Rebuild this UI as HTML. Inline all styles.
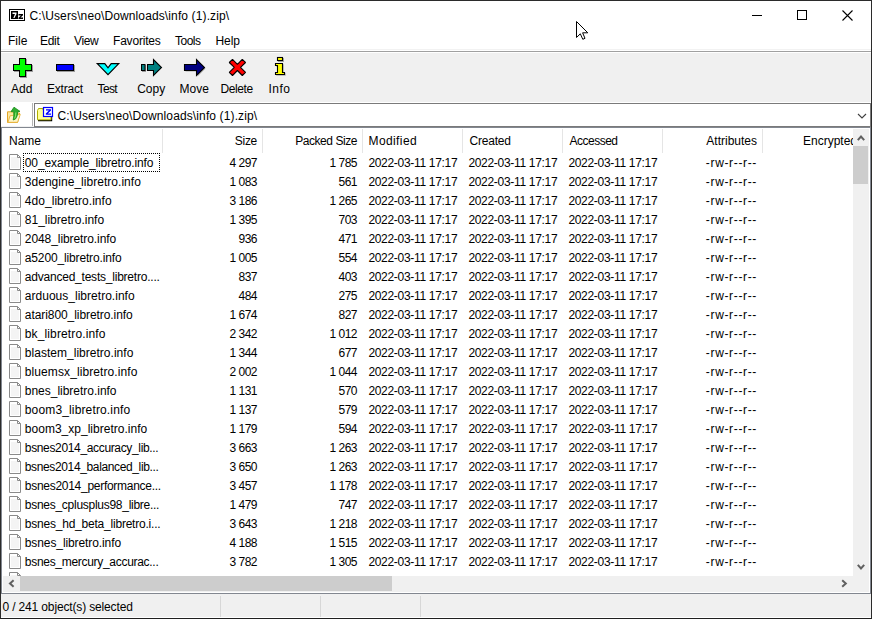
<!DOCTYPE html><html><head><meta charset="utf-8"><style>
*{margin:0;padding:0;box-sizing:border-box}
html,body{width:872px;height:619px;overflow:hidden;background:#fff}
body{position:relative;font-family:"Liberation Sans",sans-serif;font-size:12px;color:#000}
.a{position:absolute}
.t{position:absolute;white-space:pre;line-height:14px;height:14px}
.tr{text-align:right}
.ln{position:absolute}
svg{position:absolute;overflow:visible}
</style></head><body>
<div class="a" style="left:0;top:0;width:872px;height:619px;border:1px solid #2b2b2b;border-bottom-color:#1f1f1f"></div>
<svg style="left:9px;top:9px" width="16" height="12" viewBox="0 0 16 12">
<rect x="0.5" y="0.5" width="15" height="11" fill="#fff" stroke="#000"/>
<rect x="2" y="2" width="7" height="8" fill="#000"/>
<path d="M3.5 3.5 H7.5 V5 L5.5 9 H4.3 L6 5 H3.5 Z" fill="#fff"/>
<path d="M9.5 5 H14 V6.3 L11.5 8.6 H14 V10 H9.5 V8.7 L12 6.4 H9.5 Z" fill="#000"/>
</svg>
<div class="t " style="left:29.5px;top:9px;letter-spacing:0.12px">C:\Users\neo\Downloads\info (1).zip\</div>
<div class="ln" style="left:752px;top:15px;width:10px;height:1px;background:#000"></div>
<div class="ln" style="left:797px;top:10px;width:10px;height:10px;border:1px solid #000"></div>
<svg style="left:842px;top:10px" width="11" height="11" viewBox="0 0 11 11"><path d="M0.5 0.5 L10.5 10.5 M10.5 0.5 L0.5 10.5" stroke="#000" stroke-width="1.1"/></svg>
<div class="t " style="left:8px;top:34px;letter-spacing:0px">File</div>
<div class="t " style="left:40px;top:34px;letter-spacing:-0.3px">Edit</div>
<div class="t " style="left:74px;top:34px;letter-spacing:-0.4px">View</div>
<div class="t " style="left:113px;top:34px;letter-spacing:-0.2px">Favorites</div>
<div class="t " style="left:175px;top:34px;letter-spacing:-0.5px">Tools</div>
<div class="t " style="left:215.5px;top:34px;letter-spacing:-0.1px">Help</div>
<div class="ln" style="left:1px;top:49px;width:870px;height:1px;background:#f2f2f2"></div>
<div class="ln" style="left:1px;top:51px;width:870px;height:1px;background:#a0a0a0"></div>
<div class="a" style="left:1px;top:53px;width:870px;height:49px;background:#f0f0f0"></div>
<svg style="left:0;top:0" width="872" height="110">
<defs><filter id="sh" x="-20%" y="-20%" width="140%" height="140%"><feOffset dx="1" dy="1"/><feGaussianBlur stdDeviation="0.4"/></filter></defs>
<g>
<path d="M19 58H26V64H32V71H26V77H19V71H13V64H19Z" fill="#000" opacity="0.35" transform="translate(1,1)"/>
<path d="M19 58H26V64H32V71H26V77H19V71H13V64H19Z" fill="#000"/>
<path d="M20 59H25V65H31V70H25V76H20V70H14V65H20Z" fill="#00ff00"/>
</g>
<g>
<rect x="57" y="65" width="18" height="7" fill="#000" opacity="0.35"/>
<rect x="56" y="64" width="18" height="7" fill="#000"/>
<rect x="57" y="65" width="16" height="5" fill="#0000ff"/>
</g>
<g>
<path d="M97.3 63.6H104.8L108 67.8L111.2 63.6H118.7L108 74.6Z" fill="#00ffff" stroke="#000" stroke-width="1.2" stroke-linejoin="miter"/>
</g>
<g>
<rect x="142" y="65" width="4" height="7" fill="#000" opacity="0.35"/>
<rect x="141.5" y="64.5" width="3.5" height="6" fill="#008080" stroke="#000" stroke-width="1"/>
<path d="M147.5 64.5H153.5V59.5L161.5 67.5L153.5 75.5V70.5H147.5Z" fill="#008080" stroke="#000" stroke-width="1.1"/>
</g>
<g>
<path d="M184.5 64.5H196.5V59.5L204.5 67.5L196.5 75.5V70.5H184.5Z" fill="#000" opacity="0.3" transform="translate(1,1)"/>
<path d="M184.5 64.5H196.5V59.5L204.5 67.5L196.5 75.5V70.5H184.5Z" fill="#000080" stroke="#000" stroke-width="1.1"/>
</g>
<g>
<path d="M229.3 62.5L232.5 59.3L237.4 64.3L242.3 59.3L245.5 62.5L240.5 67.4L245.5 72.3L242.3 75.5L237.4 70.5L232.5 75.5L229.3 72.3L234.3 67.4Z" fill="#ff0000" stroke="#000" stroke-width="1.1" stroke-linejoin="bevel"/>
</g>
<g>
<rect x="278" y="58" width="6" height="4" fill="#000" opacity="0.3"/>
<rect x="277.5" y="57.5" width="5" height="3" fill="#ffff00" stroke="#000" stroke-width="1.1"/>
<path d="M275.5 63.5 H282.5 V72.5 H284.5 V74.5 H275.5 V72.5 H277.5 V65.5 H275.5Z" fill="#000" opacity="0.3" stroke="#000" stroke-width="1.1" stroke-opacity="0.3" transform="translate(1,1)"/>
<path d="M275.5 63.5 H282.5 V72.5 H284.5 V74.5 H275.5 V72.5 H277.5 V65.5 H275.5Z" fill="#ffff00" stroke="#000" stroke-width="1.1"/>
</g>
</svg>
<div class="t " style="left:11px;top:82px;letter-spacing:0px">Add</div>
<div class="t " style="left:47px;top:82px;letter-spacing:-0.2px">Extract</div>
<div class="t " style="left:97.5px;top:82px;letter-spacing:-0.6px">Test</div>
<div class="t " style="left:137.2px;top:82px;letter-spacing:0px">Copy</div>
<div class="t " style="left:179.5px;top:82px;letter-spacing:0px">Move</div>
<div class="t " style="left:220.5px;top:82px;letter-spacing:-0.4px">Delete</div>
<div class="t " style="left:268.5px;top:82px;letter-spacing:0.5px">Info</div>
<div class="ln" style="left:1px;top:126px;width:33px;height:1px;background:#f0f0f0"></div>
<div class="ln" style="left:32px;top:103px;width:1px;height:23px;background:#b4b4b4"></div>
<div class="a" style="left:34px;top:103px;width:837px;height:24px;border:1px solid #7a7a7a;background:#fff"></div>
<svg style="left:0;top:0" width="872" height="130">
<path d="M7.5 111.8 H12.5 L13.5 113 H19.5 V114.5 L17.5 122.5 H7.5 Z" fill="#fce9a2" stroke="#e3a72a" stroke-width="1"/>
<path d="M10 115.8 L20.3 114.3 L17.6 122.3 H8 Z" fill="#fff5c6" stroke="#e8b33c" stroke-width="0.9"/>
<path d="M11 111.6 L14 107.2 L20 111.4 L17.8 111.5 Q17.7 116.2 15.5 119 L13.2 120 Q14.1 116 13.8 111.6 Z" fill="#2fae2f" stroke="#128a12" stroke-width="0.8" stroke-linejoin="round"/>
<path d="M15.8 112.5 Q15.9 116.5 14.6 118.5" fill="none" stroke="#86e46a" stroke-width="1.1"/>
<path d="M38 121.3 H52.2 V117 H51 V120.1 H38Z" fill="#000"/>
<path d="M37.5 110.5 L38.5 108.5 H43 V110 H51 V119.8 H37.5 Z" fill="#ffff99" stroke="#b0b000" stroke-width="1"/>
<rect x="43.5" y="107.5" width="9" height="9" fill="#fff" stroke="#0000ff" stroke-width="1.2"/>
<path d="M46 109.2 H51 V110.6 L47.9 113.4 H51 V114.8 H45.8 V113.4 L48.9 110.6 H46 Z" fill="#0000ff"/>
<path d="M858 114 L862 118 L866 114" fill="none" stroke="#404040" stroke-width="1.1"/>
</svg>
<div class="t " style="left:57.5px;top:109px;letter-spacing:0.12px">C:\Users\neo\Downloads\info (1).zip\</div>
<div class="a" style="left:1px;top:127px;width:870px;height:467px;border:1px solid #828790;border-right-color:#828790"></div>
<div class="a" style="left:2px;top:128px;width:868px;height:465px;background:#fff"></div>
<div class="ln" style="left:162px;top:129px;width:1px;height:24px;background:#e5e5e5"></div>
<div class="ln" style="left:262px;top:129px;width:1px;height:24px;background:#e5e5e5"></div>
<div class="ln" style="left:362px;top:129px;width:1px;height:24px;background:#e5e5e5"></div>
<div class="ln" style="left:462px;top:129px;width:1px;height:24px;background:#e5e5e5"></div>
<div class="ln" style="left:562px;top:129px;width:1px;height:24px;background:#e5e5e5"></div>
<div class="ln" style="left:662px;top:129px;width:1px;height:24px;background:#e5e5e5"></div>
<div class="ln" style="left:762px;top:129px;width:1px;height:24px;background:#e5e5e5"></div>
<div class="t " style="left:9px;top:134px;">Name</div>
<div class="t tr " style="right:615px;top:134px;letter-spacing:-0.3px">Size</div>
<div class="t tr " style="right:515px;top:134px;letter-spacing:-0.45px">Packed Size</div>
<div class="t " style="left:368.5px;top:134px;letter-spacing:0.4px">Modified</div>
<div class="t " style="left:469.5px;top:134px;letter-spacing:-0.2px">Created</div>
<div class="t " style="left:569.5px;top:134px;letter-spacing:-0.5px">Accessed</div>
<div class="t tr " style="right:115px;top:134px;">Attributes</div>
<div class="t tr " style="right:15px;top:134px;">Encrypted</div>
<div class="a" style="left:3px;top:153px;width:850px;height:423px;overflow:hidden"><div class="a" style="left:-3px;top:-153px;width:872px;height:619px"><svg style="left:9px;top:154px" width="12" height="16" viewBox="0 0 12 16"><path d="M0.5 0.5 H8.5 L11.5 3.5 V15.5 H0.5 Z" fill="#fff" stroke="#8a8a8a"/><rect x="2" y="3" width="8" height="11" fill="#f4f4f4"/><path d="M8.5 0.5 V3.5 H11.5" fill="none" stroke="#8a8a8a"/></svg><div class="t " style="left:24.8px;top:156px;letter-spacing:-0.121px">00_example_libretro.info</div><div class="t tr " style="right:615px;top:156px;letter-spacing:-0.5px">4 297</div><div class="t tr " style="right:515px;top:156px;letter-spacing:-0.5px">1 785</div><div class="t " style="left:368.4px;top:156px;letter-spacing:-0.31px">2022-03-11 17:17</div><div class="t " style="left:468.4px;top:156px;letter-spacing:-0.31px">2022-03-11 17:17</div><div class="t " style="left:568.4px;top:156px;letter-spacing:-0.31px">2022-03-11 17:17</div><div class="t tr " style="right:115px;top:156px;letter-spacing:0.65px">-rw-r--r--</div><svg style="left:9px;top:173px" width="12" height="16" viewBox="0 0 12 16"><path d="M0.5 0.5 H8.5 L11.5 3.5 V15.5 H0.5 Z" fill="#fff" stroke="#8a8a8a"/><rect x="2" y="3" width="8" height="11" fill="#f4f4f4"/><path d="M8.5 0.5 V3.5 H11.5" fill="none" stroke="#8a8a8a"/></svg><div class="t " style="left:24.8px;top:175px;letter-spacing:0.029px">3dengine_libretro.info</div><div class="t tr " style="right:615px;top:175px;letter-spacing:-0.5px">1 083</div><div class="t tr " style="right:515px;top:175px;letter-spacing:-0.5px">561</div><div class="t " style="left:368.4px;top:175px;letter-spacing:-0.31px">2022-03-11 17:17</div><div class="t " style="left:468.4px;top:175px;letter-spacing:-0.31px">2022-03-11 17:17</div><div class="t " style="left:568.4px;top:175px;letter-spacing:-0.31px">2022-03-11 17:17</div><div class="t tr " style="right:115px;top:175px;letter-spacing:0.65px">-rw-r--r--</div><svg style="left:9px;top:192px" width="12" height="16" viewBox="0 0 12 16"><path d="M0.5 0.5 H8.5 L11.5 3.5 V15.5 H0.5 Z" fill="#fff" stroke="#8a8a8a"/><rect x="2" y="3" width="8" height="11" fill="#f4f4f4"/><path d="M8.5 0.5 V3.5 H11.5" fill="none" stroke="#8a8a8a"/></svg><div class="t " style="left:24.8px;top:194px;letter-spacing:0.05px">4do_libretro.info</div><div class="t tr " style="right:615px;top:194px;letter-spacing:-0.5px">3 186</div><div class="t tr " style="right:515px;top:194px;letter-spacing:-0.5px">1 265</div><div class="t " style="left:368.4px;top:194px;letter-spacing:-0.31px">2022-03-11 17:17</div><div class="t " style="left:468.4px;top:194px;letter-spacing:-0.31px">2022-03-11 17:17</div><div class="t " style="left:568.4px;top:194px;letter-spacing:-0.31px">2022-03-11 17:17</div><div class="t tr " style="right:115px;top:194px;letter-spacing:0.65px">-rw-r--r--</div><svg style="left:9px;top:211px" width="12" height="16" viewBox="0 0 12 16"><path d="M0.5 0.5 H8.5 L11.5 3.5 V15.5 H0.5 Z" fill="#fff" stroke="#8a8a8a"/><rect x="2" y="3" width="8" height="11" fill="#f4f4f4"/><path d="M8.5 0.5 V3.5 H11.5" fill="none" stroke="#8a8a8a"/></svg><div class="t " style="left:24.8px;top:213px;letter-spacing:-0.006px">81_libretro.info</div><div class="t tr " style="right:615px;top:213px;letter-spacing:-0.5px">1 395</div><div class="t tr " style="right:515px;top:213px;letter-spacing:-0.5px">703</div><div class="t " style="left:368.4px;top:213px;letter-spacing:-0.31px">2022-03-11 17:17</div><div class="t " style="left:468.4px;top:213px;letter-spacing:-0.31px">2022-03-11 17:17</div><div class="t " style="left:568.4px;top:213px;letter-spacing:-0.31px">2022-03-11 17:17</div><div class="t tr " style="right:115px;top:213px;letter-spacing:0.65px">-rw-r--r--</div><svg style="left:9px;top:230px" width="12" height="16" viewBox="0 0 12 16"><path d="M0.5 0.5 H8.5 L11.5 3.5 V15.5 H0.5 Z" fill="#fff" stroke="#8a8a8a"/><rect x="2" y="3" width="8" height="11" fill="#f4f4f4"/><path d="M8.5 0.5 V3.5 H11.5" fill="none" stroke="#8a8a8a"/></svg><div class="t " style="left:24.8px;top:232px;letter-spacing:-0.076px">2048_libretro.info</div><div class="t tr " style="right:615px;top:232px;letter-spacing:-0.5px">936</div><div class="t tr " style="right:515px;top:232px;letter-spacing:-0.5px">471</div><div class="t " style="left:368.4px;top:232px;letter-spacing:-0.31px">2022-03-11 17:17</div><div class="t " style="left:468.4px;top:232px;letter-spacing:-0.31px">2022-03-11 17:17</div><div class="t " style="left:568.4px;top:232px;letter-spacing:-0.31px">2022-03-11 17:17</div><div class="t tr " style="right:115px;top:232px;letter-spacing:0.65px">-rw-r--r--</div><svg style="left:9px;top:249px" width="12" height="16" viewBox="0 0 12 16"><path d="M0.5 0.5 H8.5 L11.5 3.5 V15.5 H0.5 Z" fill="#fff" stroke="#8a8a8a"/><rect x="2" y="3" width="8" height="11" fill="#f4f4f4"/><path d="M8.5 0.5 V3.5 H11.5" fill="none" stroke="#8a8a8a"/></svg><div class="t " style="left:24.8px;top:251px;letter-spacing:-0.144px">a5200_libretro.info</div><div class="t tr " style="right:615px;top:251px;letter-spacing:-0.5px">1 005</div><div class="t tr " style="right:515px;top:251px;letter-spacing:-0.5px">554</div><div class="t " style="left:368.4px;top:251px;letter-spacing:-0.31px">2022-03-11 17:17</div><div class="t " style="left:468.4px;top:251px;letter-spacing:-0.31px">2022-03-11 17:17</div><div class="t " style="left:568.4px;top:251px;letter-spacing:-0.31px">2022-03-11 17:17</div><div class="t tr " style="right:115px;top:251px;letter-spacing:0.65px">-rw-r--r--</div><svg style="left:9px;top:268px" width="12" height="16" viewBox="0 0 12 16"><path d="M0.5 0.5 H8.5 L11.5 3.5 V15.5 H0.5 Z" fill="#fff" stroke="#8a8a8a"/><rect x="2" y="3" width="8" height="11" fill="#f4f4f4"/><path d="M8.5 0.5 V3.5 H11.5" fill="none" stroke="#8a8a8a"/></svg><div class="t " style="left:24.8px;top:270px;letter-spacing:-0.219px">advanced_tests_libretro....</div><div class="t tr " style="right:615px;top:270px;letter-spacing:-0.5px">837</div><div class="t tr " style="right:515px;top:270px;letter-spacing:-0.5px">403</div><div class="t " style="left:368.4px;top:270px;letter-spacing:-0.31px">2022-03-11 17:17</div><div class="t " style="left:468.4px;top:270px;letter-spacing:-0.31px">2022-03-11 17:17</div><div class="t " style="left:568.4px;top:270px;letter-spacing:-0.31px">2022-03-11 17:17</div><div class="t tr " style="right:115px;top:270px;letter-spacing:0.65px">-rw-r--r--</div><svg style="left:9px;top:287px" width="12" height="16" viewBox="0 0 12 16"><path d="M0.5 0.5 H8.5 L11.5 3.5 V15.5 H0.5 Z" fill="#fff" stroke="#8a8a8a"/><rect x="2" y="3" width="8" height="11" fill="#f4f4f4"/><path d="M8.5 0.5 V3.5 H11.5" fill="none" stroke="#8a8a8a"/></svg><div class="t " style="left:24.8px;top:289px;letter-spacing:0.02px">arduous_libretro.info</div><div class="t tr " style="right:615px;top:289px;letter-spacing:-0.5px">484</div><div class="t tr " style="right:515px;top:289px;letter-spacing:-0.5px">275</div><div class="t " style="left:368.4px;top:289px;letter-spacing:-0.31px">2022-03-11 17:17</div><div class="t " style="left:468.4px;top:289px;letter-spacing:-0.31px">2022-03-11 17:17</div><div class="t " style="left:568.4px;top:289px;letter-spacing:-0.31px">2022-03-11 17:17</div><div class="t tr " style="right:115px;top:289px;letter-spacing:0.65px">-rw-r--r--</div><svg style="left:9px;top:306px" width="12" height="16" viewBox="0 0 12 16"><path d="M0.5 0.5 H8.5 L11.5 3.5 V15.5 H0.5 Z" fill="#fff" stroke="#8a8a8a"/><rect x="2" y="3" width="8" height="11" fill="#f4f4f4"/><path d="M8.5 0.5 V3.5 H11.5" fill="none" stroke="#8a8a8a"/></svg><div class="t " style="left:24.8px;top:308px;letter-spacing:-0.071px">atari800_libretro.info</div><div class="t tr " style="right:615px;top:308px;letter-spacing:-0.5px">1 674</div><div class="t tr " style="right:515px;top:308px;letter-spacing:-0.5px">827</div><div class="t " style="left:368.4px;top:308px;letter-spacing:-0.31px">2022-03-11 17:17</div><div class="t " style="left:468.4px;top:308px;letter-spacing:-0.31px">2022-03-11 17:17</div><div class="t " style="left:568.4px;top:308px;letter-spacing:-0.31px">2022-03-11 17:17</div><div class="t tr " style="right:115px;top:308px;letter-spacing:0.65px">-rw-r--r--</div><svg style="left:9px;top:325px" width="12" height="16" viewBox="0 0 12 16"><path d="M0.5 0.5 H8.5 L11.5 3.5 V15.5 H0.5 Z" fill="#fff" stroke="#8a8a8a"/><rect x="2" y="3" width="8" height="11" fill="#f4f4f4"/><path d="M8.5 0.5 V3.5 H11.5" fill="none" stroke="#8a8a8a"/></svg><div class="t " style="left:24.8px;top:327px;letter-spacing:0.127px">bk_libretro.info</div><div class="t tr " style="right:615px;top:327px;letter-spacing:-0.5px">2 342</div><div class="t tr " style="right:515px;top:327px;letter-spacing:-0.5px">1 012</div><div class="t " style="left:368.4px;top:327px;letter-spacing:-0.31px">2022-03-11 17:17</div><div class="t " style="left:468.4px;top:327px;letter-spacing:-0.31px">2022-03-11 17:17</div><div class="t " style="left:568.4px;top:327px;letter-spacing:-0.31px">2022-03-11 17:17</div><div class="t tr " style="right:115px;top:327px;letter-spacing:0.65px">-rw-r--r--</div><svg style="left:9px;top:344px" width="12" height="16" viewBox="0 0 12 16"><path d="M0.5 0.5 H8.5 L11.5 3.5 V15.5 H0.5 Z" fill="#fff" stroke="#8a8a8a"/><rect x="2" y="3" width="8" height="11" fill="#f4f4f4"/><path d="M8.5 0.5 V3.5 H11.5" fill="none" stroke="#8a8a8a"/></svg><div class="t " style="left:24.8px;top:346px;letter-spacing:0.025px">blastem_libretro.info</div><div class="t tr " style="right:615px;top:346px;letter-spacing:-0.5px">1 344</div><div class="t tr " style="right:515px;top:346px;letter-spacing:-0.5px">677</div><div class="t " style="left:368.4px;top:346px;letter-spacing:-0.31px">2022-03-11 17:17</div><div class="t " style="left:468.4px;top:346px;letter-spacing:-0.31px">2022-03-11 17:17</div><div class="t " style="left:568.4px;top:346px;letter-spacing:-0.31px">2022-03-11 17:17</div><div class="t tr " style="right:115px;top:346px;letter-spacing:0.65px">-rw-r--r--</div><svg style="left:9px;top:363px" width="12" height="16" viewBox="0 0 12 16"><path d="M0.5 0.5 H8.5 L11.5 3.5 V15.5 H0.5 Z" fill="#fff" stroke="#8a8a8a"/><rect x="2" y="3" width="8" height="11" fill="#f4f4f4"/><path d="M8.5 0.5 V3.5 H11.5" fill="none" stroke="#8a8a8a"/></svg><div class="t " style="left:24.8px;top:365px;letter-spacing:0.095px">bluemsx_libretro.info</div><div class="t tr " style="right:615px;top:365px;letter-spacing:-0.5px">2 002</div><div class="t tr " style="right:515px;top:365px;letter-spacing:-0.5px">1 044</div><div class="t " style="left:368.4px;top:365px;letter-spacing:-0.31px">2022-03-11 17:17</div><div class="t " style="left:468.4px;top:365px;letter-spacing:-0.31px">2022-03-11 17:17</div><div class="t " style="left:568.4px;top:365px;letter-spacing:-0.31px">2022-03-11 17:17</div><div class="t tr " style="right:115px;top:365px;letter-spacing:0.65px">-rw-r--r--</div><svg style="left:9px;top:382px" width="12" height="16" viewBox="0 0 12 16"><path d="M0.5 0.5 H8.5 L11.5 3.5 V15.5 H0.5 Z" fill="#fff" stroke="#8a8a8a"/><rect x="2" y="3" width="8" height="11" fill="#f4f4f4"/><path d="M8.5 0.5 V3.5 H11.5" fill="none" stroke="#8a8a8a"/></svg><div class="t " style="left:24.8px;top:384px;letter-spacing:-0.018px">bnes_libretro.info</div><div class="t tr " style="right:615px;top:384px;letter-spacing:-0.5px">1 131</div><div class="t tr " style="right:515px;top:384px;letter-spacing:-0.5px">570</div><div class="t " style="left:368.4px;top:384px;letter-spacing:-0.31px">2022-03-11 17:17</div><div class="t " style="left:468.4px;top:384px;letter-spacing:-0.31px">2022-03-11 17:17</div><div class="t " style="left:568.4px;top:384px;letter-spacing:-0.31px">2022-03-11 17:17</div><div class="t tr " style="right:115px;top:384px;letter-spacing:0.65px">-rw-r--r--</div><svg style="left:9px;top:401px" width="12" height="16" viewBox="0 0 12 16"><path d="M0.5 0.5 H8.5 L11.5 3.5 V15.5 H0.5 Z" fill="#fff" stroke="#8a8a8a"/><rect x="2" y="3" width="8" height="11" fill="#f4f4f4"/><path d="M8.5 0.5 V3.5 H11.5" fill="none" stroke="#8a8a8a"/></svg><div class="t " style="left:24.8px;top:403px;letter-spacing:0.145px">boom3_libretro.info</div><div class="t tr " style="right:615px;top:403px;letter-spacing:-0.5px">1 137</div><div class="t tr " style="right:515px;top:403px;letter-spacing:-0.5px">579</div><div class="t " style="left:368.4px;top:403px;letter-spacing:-0.31px">2022-03-11 17:17</div><div class="t " style="left:468.4px;top:403px;letter-spacing:-0.31px">2022-03-11 17:17</div><div class="t " style="left:568.4px;top:403px;letter-spacing:-0.31px">2022-03-11 17:17</div><div class="t tr " style="right:115px;top:403px;letter-spacing:0.65px">-rw-r--r--</div><svg style="left:9px;top:420px" width="12" height="16" viewBox="0 0 12 16"><path d="M0.5 0.5 H8.5 L11.5 3.5 V15.5 H0.5 Z" fill="#fff" stroke="#8a8a8a"/><rect x="2" y="3" width="8" height="11" fill="#f4f4f4"/><path d="M8.5 0.5 V3.5 H11.5" fill="none" stroke="#8a8a8a"/></svg><div class="t " style="left:24.8px;top:422px;letter-spacing:0.019px">boom3_xp_libretro.info</div><div class="t tr " style="right:615px;top:422px;letter-spacing:-0.5px">1 179</div><div class="t tr " style="right:515px;top:422px;letter-spacing:-0.5px">594</div><div class="t " style="left:368.4px;top:422px;letter-spacing:-0.31px">2022-03-11 17:17</div><div class="t " style="left:468.4px;top:422px;letter-spacing:-0.31px">2022-03-11 17:17</div><div class="t " style="left:568.4px;top:422px;letter-spacing:-0.31px">2022-03-11 17:17</div><div class="t tr " style="right:115px;top:422px;letter-spacing:0.65px">-rw-r--r--</div><svg style="left:9px;top:439px" width="12" height="16" viewBox="0 0 12 16"><path d="M0.5 0.5 H8.5 L11.5 3.5 V15.5 H0.5 Z" fill="#fff" stroke="#8a8a8a"/><rect x="2" y="3" width="8" height="11" fill="#f4f4f4"/><path d="M8.5 0.5 V3.5 H11.5" fill="none" stroke="#8a8a8a"/></svg><div class="t " style="left:24.8px;top:441px;letter-spacing:-0.345px">bsnes2014_accuracy_lib...</div><div class="t tr " style="right:615px;top:441px;letter-spacing:-0.5px">3 663</div><div class="t tr " style="right:515px;top:441px;letter-spacing:-0.5px">1 263</div><div class="t " style="left:368.4px;top:441px;letter-spacing:-0.31px">2022-03-11 17:17</div><div class="t " style="left:468.4px;top:441px;letter-spacing:-0.31px">2022-03-11 17:17</div><div class="t " style="left:568.4px;top:441px;letter-spacing:-0.31px">2022-03-11 17:17</div><div class="t tr " style="right:115px;top:441px;letter-spacing:0.65px">-rw-r--r--</div><svg style="left:9px;top:458px" width="12" height="16" viewBox="0 0 12 16"><path d="M0.5 0.5 H8.5 L11.5 3.5 V15.5 H0.5 Z" fill="#fff" stroke="#8a8a8a"/><rect x="2" y="3" width="8" height="11" fill="#f4f4f4"/><path d="M8.5 0.5 V3.5 H11.5" fill="none" stroke="#8a8a8a"/></svg><div class="t " style="left:24.8px;top:460px;letter-spacing:-0.366px">bsnes2014_balanced_lib...</div><div class="t tr " style="right:615px;top:460px;letter-spacing:-0.5px">3 650</div><div class="t tr " style="right:515px;top:460px;letter-spacing:-0.5px">1 263</div><div class="t " style="left:368.4px;top:460px;letter-spacing:-0.31px">2022-03-11 17:17</div><div class="t " style="left:468.4px;top:460px;letter-spacing:-0.31px">2022-03-11 17:17</div><div class="t " style="left:568.4px;top:460px;letter-spacing:-0.31px">2022-03-11 17:17</div><div class="t tr " style="right:115px;top:460px;letter-spacing:0.65px">-rw-r--r--</div><svg style="left:9px;top:477px" width="12" height="16" viewBox="0 0 12 16"><path d="M0.5 0.5 H8.5 L11.5 3.5 V15.5 H0.5 Z" fill="#fff" stroke="#8a8a8a"/><rect x="2" y="3" width="8" height="11" fill="#f4f4f4"/><path d="M8.5 0.5 V3.5 H11.5" fill="none" stroke="#8a8a8a"/></svg><div class="t " style="left:24.8px;top:479px;letter-spacing:-0.278px">bsnes2014_performance...</div><div class="t tr " style="right:615px;top:479px;letter-spacing:-0.5px">3 457</div><div class="t tr " style="right:515px;top:479px;letter-spacing:-0.5px">1 178</div><div class="t " style="left:368.4px;top:479px;letter-spacing:-0.31px">2022-03-11 17:17</div><div class="t " style="left:468.4px;top:479px;letter-spacing:-0.31px">2022-03-11 17:17</div><div class="t " style="left:568.4px;top:479px;letter-spacing:-0.31px">2022-03-11 17:17</div><div class="t tr " style="right:115px;top:479px;letter-spacing:0.65px">-rw-r--r--</div><svg style="left:9px;top:496px" width="12" height="16" viewBox="0 0 12 16"><path d="M0.5 0.5 H8.5 L11.5 3.5 V15.5 H0.5 Z" fill="#fff" stroke="#8a8a8a"/><rect x="2" y="3" width="8" height="11" fill="#f4f4f4"/><path d="M8.5 0.5 V3.5 H11.5" fill="none" stroke="#8a8a8a"/></svg><div class="t " style="left:24.8px;top:498px;letter-spacing:-0.272px">bsnes_cplusplus98_libre...</div><div class="t tr " style="right:615px;top:498px;letter-spacing:-0.5px">1 479</div><div class="t tr " style="right:515px;top:498px;letter-spacing:-0.5px">747</div><div class="t " style="left:368.4px;top:498px;letter-spacing:-0.31px">2022-03-11 17:17</div><div class="t " style="left:468.4px;top:498px;letter-spacing:-0.31px">2022-03-11 17:17</div><div class="t " style="left:568.4px;top:498px;letter-spacing:-0.31px">2022-03-11 17:17</div><div class="t tr " style="right:115px;top:498px;letter-spacing:0.65px">-rw-r--r--</div><svg style="left:9px;top:515px" width="12" height="16" viewBox="0 0 12 16"><path d="M0.5 0.5 H8.5 L11.5 3.5 V15.5 H0.5 Z" fill="#fff" stroke="#8a8a8a"/><rect x="2" y="3" width="8" height="11" fill="#f4f4f4"/><path d="M8.5 0.5 V3.5 H11.5" fill="none" stroke="#8a8a8a"/></svg><div class="t " style="left:24.8px;top:517px;letter-spacing:-0.216px">bsnes_hd_beta_libretro.i...</div><div class="t tr " style="right:615px;top:517px;letter-spacing:-0.5px">3 643</div><div class="t tr " style="right:515px;top:517px;letter-spacing:-0.5px">1 218</div><div class="t " style="left:368.4px;top:517px;letter-spacing:-0.31px">2022-03-11 17:17</div><div class="t " style="left:468.4px;top:517px;letter-spacing:-0.31px">2022-03-11 17:17</div><div class="t " style="left:568.4px;top:517px;letter-spacing:-0.31px">2022-03-11 17:17</div><div class="t tr " style="right:115px;top:517px;letter-spacing:0.65px">-rw-r--r--</div><svg style="left:9px;top:534px" width="12" height="16" viewBox="0 0 12 16"><path d="M0.5 0.5 H8.5 L11.5 3.5 V15.5 H0.5 Z" fill="#fff" stroke="#8a8a8a"/><rect x="2" y="3" width="8" height="11" fill="#f4f4f4"/><path d="M8.5 0.5 V3.5 H11.5" fill="none" stroke="#8a8a8a"/></svg><div class="t " style="left:24.8px;top:536px;letter-spacing:-0.1px">bsnes_libretro.info</div><div class="t tr " style="right:615px;top:536px;letter-spacing:-0.5px">4 188</div><div class="t tr " style="right:515px;top:536px;letter-spacing:-0.5px">1 515</div><div class="t " style="left:368.4px;top:536px;letter-spacing:-0.31px">2022-03-11 17:17</div><div class="t " style="left:468.4px;top:536px;letter-spacing:-0.31px">2022-03-11 17:17</div><div class="t " style="left:568.4px;top:536px;letter-spacing:-0.31px">2022-03-11 17:17</div><div class="t tr " style="right:115px;top:536px;letter-spacing:0.65px">-rw-r--r--</div><svg style="left:9px;top:553px" width="12" height="16" viewBox="0 0 12 16"><path d="M0.5 0.5 H8.5 L11.5 3.5 V15.5 H0.5 Z" fill="#fff" stroke="#8a8a8a"/><rect x="2" y="3" width="8" height="11" fill="#f4f4f4"/><path d="M8.5 0.5 V3.5 H11.5" fill="none" stroke="#8a8a8a"/></svg><div class="t " style="left:24.8px;top:555px;letter-spacing:-0.296px">bsnes_mercury_accurac...</div><div class="t tr " style="right:615px;top:555px;letter-spacing:-0.5px">3 782</div><div class="t tr " style="right:515px;top:555px;letter-spacing:-0.5px">1 305</div><div class="t " style="left:368.4px;top:555px;letter-spacing:-0.31px">2022-03-11 17:17</div><div class="t " style="left:468.4px;top:555px;letter-spacing:-0.31px">2022-03-11 17:17</div><div class="t " style="left:568.4px;top:555px;letter-spacing:-0.31px">2022-03-11 17:17</div><div class="t tr " style="right:115px;top:555px;letter-spacing:0.65px">-rw-r--r--</div><svg style="left:9px;top:572px" width="12" height="16" viewBox="0 0 12 16"><path d="M0.5 0.5 H8.5 L11.5 3.5 V15.5 H0.5 Z" fill="#fff" stroke="#8a8a8a"/><rect x="2" y="3" width="8" height="11" fill="#f4f4f4"/><path d="M8.5 0.5 V3.5 H11.5" fill="none" stroke="#8a8a8a"/></svg><div class="t " style="left:24.8px;top:574px;letter-spacing:-0.283px">bsnes_mercury_balanced...</div><div class="t tr " style="right:615px;top:574px;letter-spacing:-0.5px">3 646</div><div class="t tr " style="right:515px;top:574px;letter-spacing:-0.5px">1 266</div><div class="t " style="left:368.4px;top:574px;letter-spacing:-0.31px">2022-03-11 17:17</div><div class="t " style="left:468.4px;top:574px;letter-spacing:-0.31px">2022-03-11 17:17</div><div class="t " style="left:568.4px;top:574px;letter-spacing:-0.31px">2022-03-11 17:17</div><div class="t tr " style="right:115px;top:574px;letter-spacing:0.65px">-rw-r--r--</div></div></div>
<div class="a" style="left:23px;top:153px;width:137px;height:19px;border:1px dotted #000"></div>
<div class="a" style="left:853px;top:129px;width:16px;height:447px;background:#f0f0f0"></div>
<div class="a" style="left:853px;top:146px;width:15px;height:38px;background:#cdcdcd"></div>
<div class="a" style="left:3px;top:576px;width:866px;height:16px;background:#f0f0f0;z-index:0"></div>
<div class="a" style="left:20px;top:576px;width:372px;height:15px;background:#cdcdcd"></div>
<svg style="left:0;top:0" width="872" height="619">
<path d="M857.8 140.2 L861 136.6 L864.2 140.2" fill="none" stroke="#606060" stroke-width="2"/>
<path d="M857.8 564.8 L861 568.4 L864.2 564.8" fill="none" stroke="#606060" stroke-width="2"/>
<path d="M13.6 580.3 L10 583.5 L13.6 586.7" fill="none" stroke="#606060" stroke-width="2"/>
<path d="M842.2 580.3 L845.8 583.5 L842.2 586.7" fill="none" stroke="#606060" stroke-width="2"/>
</svg>
<div class="a" style="left:1px;top:594px;width:870px;height:23px;background:#f0f0f0"></div>
<div class="ln" style="left:220px;top:596px;width:1px;height:21px;background:#d7d7d7"></div>
<div class="ln" style="left:320px;top:596px;width:1px;height:21px;background:#d7d7d7"></div>
<div class="ln" style="left:420px;top:596px;width:1px;height:21px;background:#d7d7d7"></div>
<div class="t " style="left:2.5px;top:600px;letter-spacing:-0.15px">0 / 241 object(s) selected</div>
<svg style="left:576px;top:21px" width="13" height="20" viewBox="0 0 13 20"><path d="M0.5 0.5 V16.5 L4.3 12.8 L6.8 18.3 L9 17.3 L6.6 11.8 H11.8 Z" fill="#fff" stroke="#000" stroke-width="1" stroke-linejoin="miter"/></svg>
</body></html>
